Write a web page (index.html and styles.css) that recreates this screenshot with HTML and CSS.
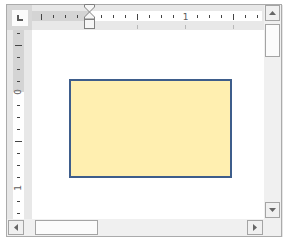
FILE: index.html
```html
<!DOCTYPE html>
<html lang="en">
<head>
    <meta charset="UTF-8">
    <title>Drawing canvas</title>
    <link rel="stylesheet" href="styles.css">
</head>
<body>
    <div class="editor">
        <!-- tab selector -->
        <div class="tab-corner">
            <span class="tab-box">
                <svg width="16" height="16" viewBox="0 0 16 16"><path d="M5 5h2v4h4v2H5z" fill="#5a5a5a"/></svg>
            </span>
        </div>

        <!-- horizontal ruler -->
        <div class="hruler">
            <svg class="ruler-svg" width="232" height="25" viewBox="0 0 232 25">
                <rect x="0" y="6" width="57" height="10" fill="#d4d4d4"/>
                <rect x="57" y="6" width="173" height="10" fill="#fff"/>
                <g fill="#444">
                    <rect x="9" y="9" width="1" height="6"/>
                    <rect x="105" y="9" width="1" height="6"/>
                    <rect x="201" y="9" width="1" height="6"/>
                    <rect x="21" y="10" width="1" height="3"/>
                    <rect x="33" y="10" width="1" height="3"/>
                    <rect x="45" y="10" width="1" height="3"/>
                    <rect x="69" y="10" width="1" height="3"/>
                    <rect x="81" y="10" width="1" height="3"/>
                    <rect x="93" y="10" width="1" height="3"/>
                    <rect x="117" y="10" width="1" height="3"/>
                    <rect x="129" y="10" width="1" height="3"/>
                    <rect x="141" y="10" width="1" height="3"/>
                    <rect x="165" y="10" width="1" height="3"/>
                    <rect x="177" y="10" width="1" height="3"/>
                    <rect x="189" y="10" width="1" height="3"/>
                    <rect x="213" y="10" width="1" height="3"/>
                    <rect x="225" y="10" width="1" height="3"/>
                </g>
                <text class="ruler-num" x="153.5" y="15" text-anchor="middle">1</text>
                <g fill="#b8b8b8">
                    <rect x="105" y="20" width="1" height="4"/>
                    <rect x="153" y="20" width="1" height="4"/>
                    <rect x="201" y="20" width="1" height="4"/>
                </g>
            </svg>
            <!-- indent markers -->
            <svg class="indent-marker" width="11" height="25" viewBox="0 0 11 25">
                <path d="M0.5 0.5H10.5V3L5.5 8L0.5 3Z" fill="#f6f6f6" stroke="#808080"/>
                <path d="M5.5 8L10.5 13V15H0.5V13Z" fill="#f6f6f6" stroke="#808080"/>
                <rect x="0.5" y="15.5" width="10" height="9" fill="#f6f6f6" stroke="#808080"/>
            </svg>
        </div>

        <!-- vertical scrollbar -->
        <div class="vscroll">
            <button class="sb-btn sb-btn-v"><svg width="7" height="4" viewBox="0 0 7 4"><polygon points="0,4 3.5,0 7,4" fill="#666"/></svg></button>
            <div class="sb-thumb sb-thumb-v"></div>
            <div class="sb-fill"></div>
            <button class="sb-btn sb-btn-v"><svg width="7" height="4" viewBox="0 0 7 4"><polygon points="0,0 7,0 3.5,4" fill="#666"/></svg></button>
        </div>

        <!-- vertical ruler -->
        <div class="vruler">
            <svg class="ruler-svg" width="25" height="189" viewBox="0 0 25 189">
                <rect x="6" y="0" width="11" height="62" fill="#d4d4d4"/>
                <rect x="6" y="62" width="11" height="127" fill="#fff"/>
                <g fill="#444">
                    <rect x="8" y="15" width="7" height="1"/>
                    <rect x="8" y="111" width="7" height="1"/>
                    <rect x="10" y="3" width="3" height="1"/>
                    <rect x="10" y="27" width="3" height="1"/>
                    <rect x="10" y="39" width="3" height="1"/>
                    <rect x="10" y="51" width="3" height="1"/>
                    <rect x="10" y="75" width="3" height="1"/>
                    <rect x="10" y="87" width="3" height="1"/>
                    <rect x="10" y="99" width="3" height="1"/>
                    <rect x="10" y="123" width="3" height="1"/>
                    <rect x="10" y="135" width="3" height="1"/>
                    <rect x="10" y="147" width="3" height="1"/>
                    <rect x="10" y="171" width="3" height="1"/>
                    <rect x="10" y="183" width="3" height="1"/>
                </g>
                <text class="ruler-num" transform="translate(13.5 62) rotate(-90)" text-anchor="middle">0</text>
                <text class="ruler-num" transform="translate(13.5 158) rotate(-90)" text-anchor="middle">1</text>
            </svg>
        </div>

        <!-- page -->
        <div class="canvas">
            <div class="shape"></div>
        </div>

        <!-- horizontal scrollbar -->
        <div class="hscroll">
            <button class="sb-btn sb-btn-h"><svg width="4" height="7" viewBox="0 0 4 7"><polygon points="4,0 0,3.5 4,7" fill="#666"/></svg></button>
            <div class="sb-thumb sb-thumb-h"></div>
            <div class="sb-fill"></div>
            <button class="sb-btn sb-btn-h"><svg width="4" height="7" viewBox="0 0 4 7"><polygon points="0,0 4,3.5 0,7" fill="#666"/></svg></button>
        </div>

        <div class="sb-corner"></div>
    </div>
</body>
</html>
```
FILE: styles.css
```css
* {
    box-sizing: border-box;
}

body {
    margin: 0;
    background: #fff;
    font-family: "Liberation Sans", Arial, sans-serif;
}

/* Cadre principal */
.editor {
    margin: 4px 0 0 6px;
    width: 276px;
    height: 233px;
    border: 1px solid #ababab;
    box-shadow: 1px 1px 0 #e6e6e6;
    background: #e8e8e8;
    display: grid;
    grid-template-columns: 25px 232px 17px;
    grid-template-rows: 25px 189px 17px;
}

/* Coin du selecteur de tabulation */
.tab-corner {
    background: #d8d8d8;
    padding: 5px 0 0 5px;
}

.tab-box {
    display: block;
    width: 16px;
    height: 16px;
    background: #fbfbfb;
}

.tab-box svg {
    display: block;
}

/* Regles */
.hruler {
    position: relative;
}

.ruler-svg {
    display: block;
}

.ruler-num {
    font-family: "DejaVu Sans", "Liberation Sans", sans-serif;
    font-size: 9px;
    fill: #5c5c5c;
}

.indent-marker {
    position: absolute;
    left: 52px;
    top: -1px;
    display: block;
}

/* Zone de dessin */
.canvas {
    background: #fff;
    padding: 49px 0 0 37px;
}

.shape {
    width: 163px;
    height: 99px;
    border: 2px solid #3e5d8b;
    background: #ffefb0;
}

/* Barres de defilement */
.vscroll {
    grid-column: 3;
    grid-row: 1 / 3;
    background: #f0f0f0;
    display: flex;
    flex-direction: column;
    align-items: center;
    padding-bottom: 1px;
}

.hscroll {
    grid-column: 1 / 3;
    background: #f0f0f0;
    display: flex;
    align-items: flex-start;
    padding: 1px 1px 0 1px;
}

.sb-corner {
    background: #f0f0f0;
}

.sb-fill {
    flex: 1;
}

.sb-btn {
    border: 1px solid #a4a4a4;
    background: #f0f0f0;
    padding: 0;
    margin: 0;
    display: flex;
    align-items: center;
    justify-content: center;
}

.sb-btn svg {
    display: block;
}

.sb-btn-v {
    width: 15px;
    height: 16px;
}

.sb-btn-h {
    width: 16px;
    height: 15px;
}

.sb-thumb {
    border: 1px solid #a4a4a4;
    background: #fbfbfb;
}

.sb-thumb-v {
    width: 15px;
    height: 33px;
    margin-top: 3px;
}

.sb-thumb-h {
    width: 63px;
    height: 15px;
    margin-left: 11px;
}
```
